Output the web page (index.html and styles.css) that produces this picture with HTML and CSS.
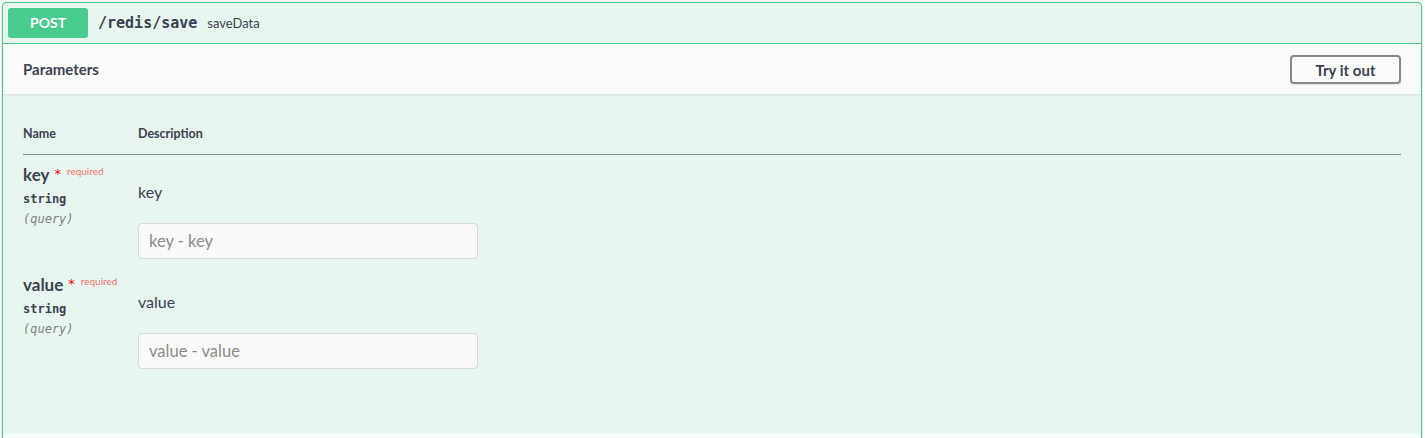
FILE: index.html
```html
<!DOCTYPE html>
<html>
<head>
<meta charset="utf-8">
<link rel="stylesheet" href="styles.css">
</head>
<body>
<div class="page">
  <div class="opblock">
    <div class="summary">
      <span class="method">POST</span>
      <span class="path">/redis/save</span>
      <span class="summary-desc">saveData</span>
    </div>
    <div class="section-header">
      <h4 class="section-title">Parameters</h4>
      <button class="try-btn">Try it out</button>
    </div>
    <div class="table-container">
      <table class="parameters">
        <thead>
          <tr>
            <th class="col-name">Name</th>
            <th class="col-desc">Description</th>
          </tr>
        </thead>
        <tbody>
          <tr>
            <td class="col-name">
              <div class="param-name">key<span class="star">*</span><span class="req">required</span></div>
              <div class="param-type">string</div>
              <div class="param-in">(query)</div>
            </td>
            <td class="col-desc">
              <div class="param-desc">key</div>
              <input class="param-input" type="text" placeholder="key - key">
            </td>
          </tr>
          <tr>
            <td class="col-name">
              <div class="param-name">value<span class="star">*</span><span class="req">required</span></div>
              <div class="param-type">string</div>
              <div class="param-in">(query)</div>
            </td>
            <td class="col-desc">
              <div class="param-desc">value</div>
              <input class="param-input" type="text" placeholder="value - value">
            </td>
          </tr>
        </tbody>
      </table>
    </div>
    <div class="section-next"></div>
  </div>
</div>
</body>
</html>
```
FILE: styles.css
```css
html, body {
  margin: 0;
  padding: 0;
  overflow: hidden;
  background: #fff;
}
body {
  font-family: Lato, "Noto Sans", sans-serif;
  color: #3b4151;
}
.page {
  padding: 2px 3px 0 2px;
}
.opblock {
  border: 1px solid #49cc90;
  border-radius: 4px;
  background: #e8f6f0;
  box-shadow: 0 0 3px rgba(0, 0, 0, 0.19);
}
.summary {
  display: flex;
  align-items: center;
  padding: 5px;
  border-bottom: 1px solid #49cc90;
}
.method {
  min-width: 80px;
  height: 30px;
  line-height: 30px;
  text-align: center;
  border-radius: 3px;
  background: #49cc90;
  color: #fff;
  font-size: 14px;
  font-weight: 700;
  text-shadow: 0 1px 0 rgba(0, 0, 0, 0.1);
}
.path {
  padding: 0 10px;
  font-family: "DejaVu Sans Mono", monospace;
  font-size: 15px;
  font-weight: 600;
  color: #3b4151;
}
.summary-desc {
  font-size: 13px;
  color: #3b4151;
}
.section-header {
  display: flex;
  align-items: center;
  justify-content: space-between;
  height: 50px;
  padding: 0 20px;
  box-sizing: border-box;
  background: rgba(255, 255, 255, 0.8);
  box-shadow: 0 1px 2px rgba(0, 0, 0, 0.1);
}
.section-title {
  margin: 0;
  font-size: 15px;
  font-weight: 700;
}
.try-btn {
  font-family: Lato, "Noto Sans", sans-serif;
  font-size: 15px;
  font-weight: 700;
  color: #3b4151;
  width: 111px;
  height: 29px;
  padding: 0;
  margin-top: 1px;
  background: transparent;
  border: 2px solid #888;
  border-radius: 4px;
  box-shadow: 0 1px 2px rgba(0, 0, 0, 0.1);
}
.table-container {
  padding: 20px 20px 59px;
}
.parameters {
  width: 100%;
  border-collapse: collapse;
}
.parameters th {
  font-size: 12.5px;
  font-weight: 700;
  text-align: left;
  padding: 12px 0;
  line-height: 16px;
  border-bottom: 1px solid rgba(59, 65, 81, 0.35);
}
.parameters td {
  padding: 10px 0 6px;
  vertical-align: top;
}
.col-name {
  width: 115px;
}
.param-name {
  font-size: 17px;
  font-weight: 700;
  line-height: 20px;
}
.star {
  position: relative;
  top: -3px;
  margin-left: 5px;
  font-family: "DejaVu Sans", sans-serif;
  color: red;
  font-size: 13px;
  font-weight: 400;
}
.req {
  position: relative;
  top: -6px;
  padding-left: 6px;
  font-size: 10px;
  font-weight: 400;
  color: rgba(255, 0, 0, 0.6);
}
.param-type {
  padding: 4px 0;
  font-family: "DejaVu Sans Mono", monospace;
  font-size: 12px;
  font-weight: 700;
  line-height: 16px;
}
.param-in {
  font-family: "DejaVu Sans Mono", monospace;
  font-size: 12px;
  font-style: italic;
  color: #808080;
  line-height: 16px;
}
.param-desc {
  padding-top: 17px;
  font-size: 16px;
  line-height: 20px;
  margin-bottom: 21px;
}
.param-input {
  display: block;
  box-sizing: border-box;
  width: 340px;
  height: 36px;
  margin: 0;
  padding: 8px 10px;
  font-family: Lato, "Noto Sans", sans-serif;
  font-size: 16.5px;
  color: #3b4151;
  background: #fafafa;
  border: 1px solid #d9d9d9;
  border-radius: 4px;
}
.param-input::placeholder {
  color: #8a8a8a;
}
.section-next {
  height: 40px;
  background: rgba(255, 255, 255, 0.8);
}
```
